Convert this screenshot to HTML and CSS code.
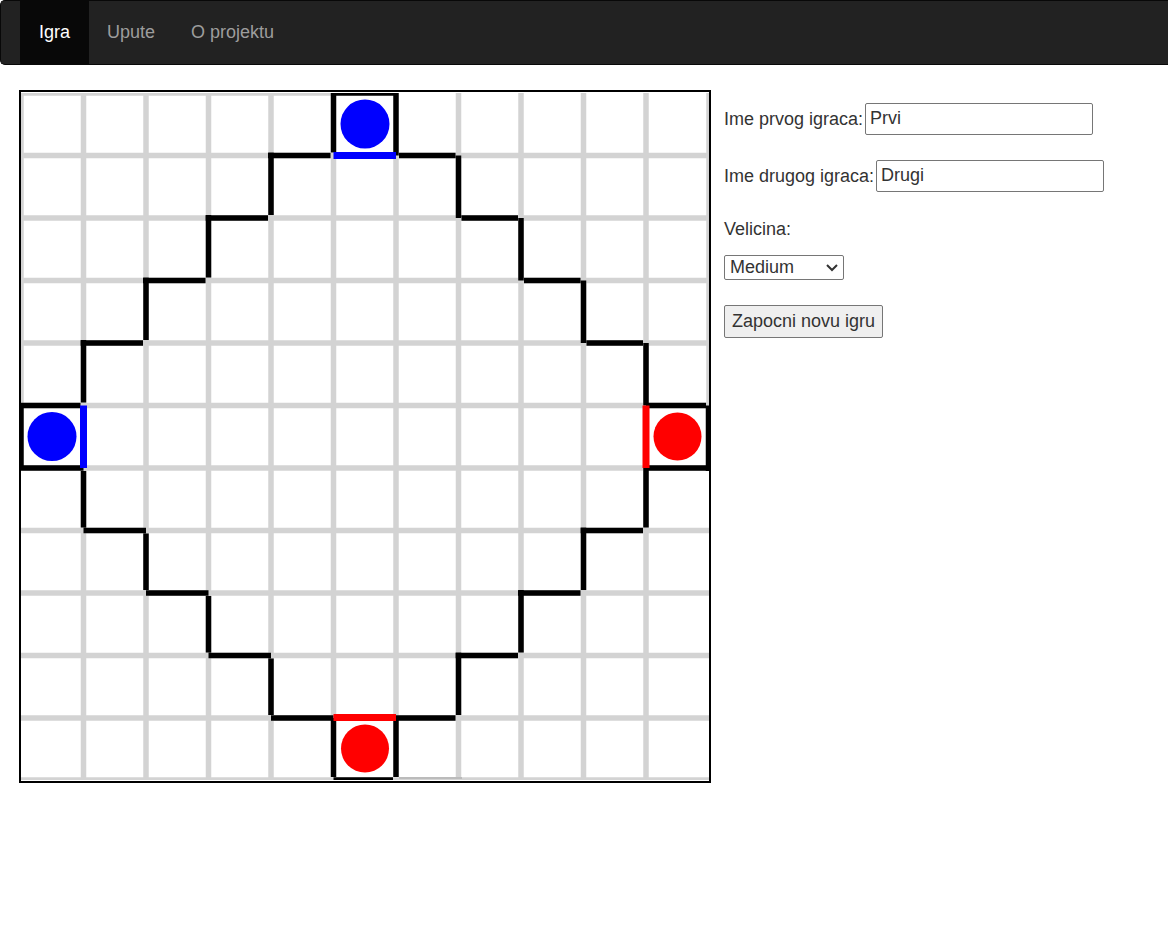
FILE: index.html
```html
<!DOCTYPE html>
<html lang="hr">
<head>
  <meta charset="utf-8">
  <title>Igra</title>
  <link rel="stylesheet" href="styles.css">
</head>
<body>
  <nav class="navbar">
    <ul class="nav-list">
      <li><a class="nav-link active" href="#igra">Igra</a></li>
      <li><a class="nav-link" href="#upute">Upute</a></li>
      <li><a class="nav-link" href="#projekt">O projektu</a></li>
    </ul>
  </nav>

  <main class="content">
    <div class="board">
      <!-- 11 x 11 cells, 125 units each -->
      <svg class="board-svg" viewBox="0 0 1376 1374" role="img" aria-label="Ploca">
        <g class="grid-lines">
          <path d="M125 0V1374M250 0V1374M375 0V1374M500 0V1374M625 125V1250M750 125V1250M875 0V1374M1000 0V1374M1125 0V1374M1250 0V1374"/>
          <path d="M0 125H1376M0 250H1376M0 375H1376M0 500H1376M0 625H1376M0 750H1376M0 875H1376M0 1000H1376M0 1125H1376M0 1250H1376M0 1374H1376"/>
          <path d="M0 0V625M0 0H625M1376 0V625"/>
          <path class="edge" d="M756 1370H882"/>
        </g>
        <g class="walls">
          <path d="M494 125H619M500 119V244M369 250H494M375 244V369M244 375H369M250 369V494M119 500H244M125 494V619"/>
          <path d="M756 125H869M875 125V250M881 250H994M1000 250V375M1006 375H1119M1125 375V500M1131 500H1244M1250 500V625"/>
          <path d="M125 756V869M125 875H250M250 881V994M250 1000H375M375 1006V1119M375 1125H500M500 1131V1244M500 1250H625"/>
          <path d="M1250 750V869M1119 875H1244M1125 869V994M994 1000H1119M1000 994V1119M869 1125H994M875 1119V1244M750 1250H869"/>
          <path d="M625 119V0H750V125"/>
          <path d="M119 625H0V750H125"/>
          <path d="M1250 625H1370M1375 625V756M1250 750H1376"/>
          <path d="M625 1250V1368M750 1250V1368M625 1374H744"/>
        </g>
        <g class="goal-blue">
          <path d="M625 125H750M125 625V750"/>
          <circle cx="688" cy="62" r="49"/>
          <circle cx="62" cy="687" r="49"/>
        </g>
        <g class="goal-red">
          <path d="M625 1249H750M1250 625V750"/>
          <circle cx="688" cy="1311" r="48"/>
          <circle cx="1313" cy="687" r="48"/>
        </g>
      </svg>
    </div>

    <form class="settings">
      <div class="field">
        <label for="player-one">Ime prvog igraca:</label>
        <input class="text-input" id="player-one" type="text" value="Prvi">
      </div>
      <div class="field">
        <label for="player-two">Ime drugog igraca:</label>
        <input class="text-input" id="player-two" type="text" value="Drugi">
      </div>
      <div class="field stacked">
        <label for="size">Velicina:</label>
        <div class="select-wrap">
          <select class="size-select" id="size">
            <option>Small</option>
            <option selected>Medium</option>
            <option>Large</option>
          </select>
          <svg class="chevron" viewBox="0 0 12 8" aria-hidden="true"><path d="M1 1L6 6L11 1"/></svg>
        </div>
      </div>
      <button class="start-button" type="button">Zapocni novu igru</button>
    </form>
  </main>
</body>
</html>
```

FILE: styles.css
```css
* {
  box-sizing: border-box;
}

body {
  margin: 0;
  background: #fff;
  color: #333;
  font-family: "Liberation Sans", Arial, sans-serif;
  font-size: 18px;
  line-height: 25px;
}

.navbar {
  padding-left: 19px;
  background: #222;
  border: 1px solid #080808;
  border-right: 0;
  border-radius: 5px 0 0 5px;
}

.nav-list {
  display: flex;
  margin: 0;
  padding: 0;
  list-style: none;
}

.nav-link {
  display: block;
  padding: 19px 18px;
  color: #9d9d9d;
  text-decoration: none;
}

.nav-link.active {
  padding: 19px;
  background: #080808;
  color: #fff;
}

.content {
  display: grid;
  grid-template-columns: minmax(0, 692px) minmax(400px, 1fr);
  column-gap: 13px;
  align-items: start;
  padding: 25px 19px;
}

.board {
  padding: 1px 0;
  border: 2px solid #000;
}

.board-svg {
  display: block;
  width: 100%;
  height: auto;
}

.grid-lines {
  fill: none;
  stroke: #d3d3d3;
  stroke-width: 11;
}

.edge {
  stroke: #bbb;
  stroke-width: 4;
}

.walls {
  fill: none;
  stroke: #000;
  stroke-width: 11;
}

.goal-blue {
  fill: #00f;
  stroke: none;
}

.goal-red {
  fill: #f00;
  stroke: none;
}

.goal-blue path {
  fill: none;
  stroke: #00f;
  stroke-width: 14;
}

.goal-red path {
  fill: none;
  stroke: #f00;
  stroke-width: 14;
}

.settings {
  display: flex;
  flex-direction: column;
  align-items: flex-start;
  gap: 25px;
  padding-top: 13px;
}

.field {
  display: flex;
  align-items: center;
  gap: 2px;
}

.field.stacked {
  flex-direction: column;
  align-items: flex-start;
  gap: 13px;
}

.text-input,
.size-select,
.start-button {
  margin: 0;
  border: 1px solid #767676;
  border-radius: 2px;
  color: #333;
  font: inherit;
}

.text-input {
  width: 228px;
  height: 32px;
  padding: 0 4px 2px;
  background: #fff;
}

.select-wrap {
  position: relative;
  display: flex;
}

.size-select {
  width: 120px;
  height: 25px;
  padding: 0 5px;
  background: #fff;
  line-height: 23px;
  appearance: none;
}

.chevron {
  position: absolute;
  top: 9px;
  right: 6px;
  width: 12px;
  height: 8px;
  fill: none;
  stroke: #333;
  stroke-width: 2;
  pointer-events: none;
}

.start-button {
  height: 33px;
  padding: 0 7px;
  background: #efefef;
}
```
